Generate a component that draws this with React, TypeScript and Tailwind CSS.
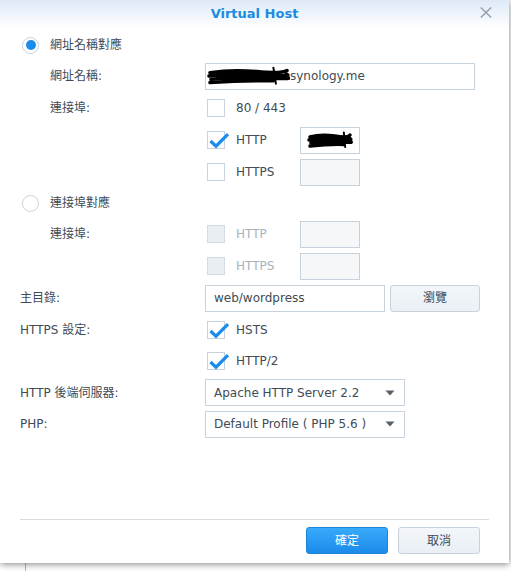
import React from "react";

const Check = () => (
  <svg
    className="absolute left-0 top-0 overflow-visible"
    width="22"
    height="18"
    viewBox="0 0 22 18"
  >
    <path
      d="M2.5 9 L8 14.2 L20 2.2"
      fill="none"
      stroke="#1a8ceb"
      strokeWidth="3.2"
      strokeLinejoin="miter"
    />
  </svg>
);

const Checkbox = ({ checked = false, disabled = false }: { checked?: boolean; disabled?: boolean }) => (
  <div
    className={
      disabled
        ? "relative w-[18px] h-[18px] shrink-0 border border-[#d3dbe3] bg-[#e9eef3]"
        : "relative w-[18px] h-[18px] shrink-0 border border-[#c8d2dc] bg-white"
    }
  >
    {checked && <Check />}
  </div>
);

const Radio = ({ checked = false }: { checked?: boolean }) => (
  <div className="w-[17px] h-[17px] shrink-0 rounded-full border border-[#c8d2dc] bg-white flex items-center justify-center">
    {checked && <div className="w-[10px] h-[10px] rounded-full bg-[#1a8ceb]" />}
  </div>
);

const Scribble = ({ w, h }: { w: number; h: number }) => (
  <svg width={w} height={h} viewBox={`0 0 ${w} ${h}`} className="shrink-0">
    <g fill="none" stroke="#000" strokeLinecap="round" strokeWidth="3.5">
      <path d={`M3 ${h * 0.35} Q ${w * 0.3} ${h * 0.2} ${w * 0.6} ${h * 0.3} T ${w - 3} ${h * 0.25}`} />
      <path d={`M2 ${h * 0.5} Q ${w * 0.35} ${h * 0.35} ${w * 0.7} ${h * 0.45} T ${w - 4} ${h * 0.4}`} />
      <path d={`M4 ${h * 0.65} Q ${w * 0.4} ${h * 0.55} ${w * 0.75} ${h * 0.6} T ${w - 6} ${h * 0.55}`} />
      <path d={`M3 ${h * 0.8} Q ${w * 0.45} ${h * 0.7} ${w * 0.8} ${h * 0.72}`} />
      <path d={`M${w * 0.15} ${h * 0.5} L ${w * 0.85} ${h * 0.5}`} strokeWidth="8" />
      <path d={`M${w * 0.8} ${h * 0.12} L ${w * 0.83} ${h * 0.85}`} strokeWidth="2" />
    </g>
  </svg>
);

const Caret = () => (
  <svg width="10" height="6" viewBox="0 0 10 6" className="shrink-0">
    <path d="M0.5 0.5 L9.5 0.5 L5 5.5 Z" fill="#56606b" />
  </svg>
);

export default function App() {
  return (
    <div className="w-[511px] h-[571px] bg-white overflow-hidden font-['DejaVu_Sans','Noto_Sans_CJK_TC',sans-serif] text-[12px] text-[#414b55]">
      <div className="relative z-10 w-[509px] h-[563px] bg-white flex flex-col shadow-[0_1px_7px_rgba(0,0,0,0.5)]">
        {/* Header */}
        <div className="h-[28px] shrink-0 flex items-center justify-center relative bg-gradient-to-b from-[#dde9f7] to-white">
          <span className="text-[13px] font-bold text-[#1a8be2]">Virtual Host</span>
          <svg className="absolute right-[17px] top-[7px]" width="12" height="11" viewBox="0 0 12 11">
            <path d="M0.8 0.5 L11.2 10.5 M11.2 0.5 L0.8 10.5" stroke="#9aa4ae" strokeWidth="1.6" />
          </svg>
        </div>

        {/* Content */}
        <div className="flex flex-col pt-[2px]">
          {/* radio 1 */}
          <div className="h-[30px] flex items-center pl-[22px] gap-[11px]">
            <Radio checked />
            <span>網址名稱對應</span>
          </div>
          <div className="h-[32px] flex items-center">
            <div className="w-[205px] pl-[50px] shrink-0">網址名稱:</div>
            <div className="w-[270px] h-[27px] border border-[#c8d2dc] flex items-center pl-[1px]">
              <Scribble w={83} h={22} />
              <span>synology.me</span>
            </div>
          </div>
          <div className="h-[32px] flex items-center">
            <div className="w-[205px] pl-[50px] shrink-0">連接埠:</div>
            <div className="flex items-center ml-[2px] gap-[11px]">
              <Checkbox />
              <span>80 / 443</span>
            </div>
          </div>
          <div className="h-[32px] flex items-center">
            <div className="w-[205px] shrink-0" />
            <div className="w-[95px] flex items-center pl-[2px] gap-[11px]">
              <Checkbox checked />
              <span>HTTP</span>
            </div>
            <div className="w-[60px] h-[27px] border border-[#c8d2dc] bg-white flex items-center justify-center">
              <Scribble w={46} h={20} />
            </div>
          </div>
          <div className="h-[32px] flex items-center">
            <div className="w-[205px] shrink-0" />
            <div className="w-[95px] flex items-center pl-[2px] gap-[11px]">
              <Checkbox />
              <span>HTTPS</span>
            </div>
            <div className="w-[60px] h-[27px] border border-[#c8d2dc] bg-[#f5f7f9]" />
          </div>

          {/* radio 2 */}
          <div className="h-[30px] flex items-center pl-[22px] gap-[11px]">
            <Radio />
            <span>連接埠對應</span>
          </div>
          <div className="h-[32px] flex items-center">
            <div className="w-[205px] pl-[50px] shrink-0">連接埠:</div>
            <div className="w-[95px] flex items-center pl-[2px] gap-[11px]">
              <Checkbox disabled />
              <span className="text-[#a8b2bc]">HTTP</span>
            </div>
            <div className="w-[60px] h-[27px] border border-[#c8d2dc] bg-[#f5f7f9]" />
          </div>
          <div className="h-[32px] flex items-center">
            <div className="w-[205px] shrink-0" />
            <div className="w-[95px] flex items-center pl-[2px] gap-[11px]">
              <Checkbox disabled />
              <span className="text-[#a8b2bc]">HTTPS</span>
            </div>
            <div className="w-[60px] h-[27px] border border-[#c8d2dc] bg-[#f5f7f9]" />
          </div>

          {/* 主目錄 */}
          <div className="h-[32px] flex items-center">
            <div className="w-[205px] pl-[20px] shrink-0">主目錄:</div>
            <div className="w-[180px] h-[27px] border border-[#c8d2dc] flex items-center pl-[8px]">
              web/wordpress
            </div>
            <div className="ml-[5px] w-[90px] h-[27px] rounded-[3px] border border-[#c8d2dc] bg-gradient-to-b from-[#f2f6fa] to-[#eaf0f6] flex items-center justify-center">
              瀏覽
            </div>
          </div>
          <div className="h-[31px] flex items-center">
            <div className="w-[205px] pl-[20px] shrink-0">HTTPS 設定:</div>
            <div className="flex items-center ml-[2px] gap-[11px]">
              <Checkbox checked />
              <span>HSTS</span>
            </div>
          </div>
          <div className="h-[32px] flex items-center">
            <div className="w-[205px] shrink-0" />
            <div className="flex items-center ml-[2px] gap-[11px]">
              <Checkbox checked />
              <span>HTTP/2</span>
            </div>
          </div>
          <div className="h-[31px] flex items-center">
            <div className="w-[205px] pl-[20px] shrink-0">HTTP 後端伺服器:</div>
            <div className="w-[200px] h-[27px] border border-[#c8d2dc] flex items-center justify-between pl-[8px] pr-[9px]">
              <span>Apache HTTP Server 2.2</span>
              <Caret />
            </div>
          </div>
          <div className="h-[32px] flex items-center">
            <div className="w-[205px] pl-[20px] shrink-0">PHP:</div>
            <div className="w-[200px] h-[27px] border border-[#c8d2dc] flex items-center justify-between pl-[8px] pr-[9px]">
              <span>Default Profile ( PHP 5.6 )</span>
              <Caret />
            </div>
          </div>
        </div>

        <div className="flex-1" />

        {/* Footer */}
        <div className="shrink-0">
          <div className="mx-[20px] h-px bg-[#d6dce2]" />
          <div className="flex justify-end gap-[10px] pt-[7px] pb-[9px] pr-[29px]">
            <div className="w-[82px] h-[27px] rounded-[3px] border border-[#1c86d9] bg-gradient-to-b from-[#38aafa] to-[#1a8bea] text-white flex items-center justify-center">
              確定
            </div>
            <div className="w-[82px] h-[27px] rounded-[3px] border border-[#c6d1dc] bg-gradient-to-b from-[#f3f6fa] to-[#e9eff5] flex items-center justify-center">
              取消
            </div>
          </div>
        </div>
      </div>
      <div className="h-[8px] ml-[25px] border-l border-[#b8b8b8]" />
    </div>
  );
}
